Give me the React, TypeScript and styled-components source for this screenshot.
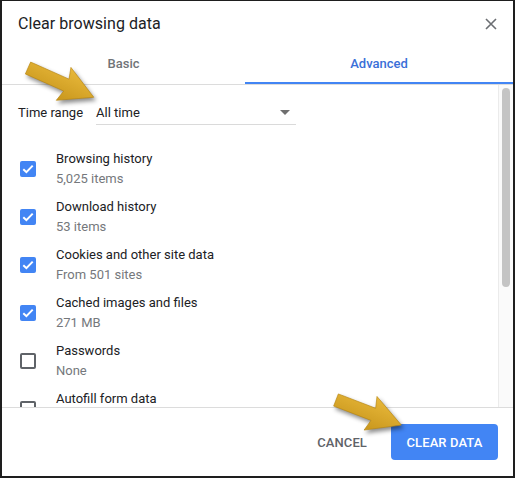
import React from "react";
import styled, { createGlobalStyle } from "styled-components";

const Global = createGlobalStyle`
  html, body { margin: 0; padding: 0; background: #ffffff; }
  body { font-family: Roboto, "Liberation Sans", Arial, sans-serif; -webkit-font-smoothing: antialiased; }
  * { box-sizing: border-box; }
`;

const Frame = styled.div`
  position: relative;
  width: 515px;
  height: 478px;
  border-style: solid;
  border-color: #1e1e1e;
  border-width: 1px 2px 2px 2px;
  background: #fff;
  display: flex;
  flex-direction: column;
  overflow: hidden;
`;

const Header = styled.div`
  height: 44px;
  display: flex;
  align-items: center;
  justify-content: space-between;
  padding: 1px 14px 0 16px;
`;

const Title = styled.div`
  font-size: 16px;
  color: #202124;
  letter-spacing: 0.05px;
`;

const CloseBtn = styled.div`
  width: 16px;
  height: 16px;
  display: flex;
  align-items: center;
  justify-content: center;
`;

const Tabs = styled.div`
  display: grid;
  grid-template-columns: 243px 1fr;
  height: 40px;
  border-bottom: 1px solid #dcdcdc;
`;

const Tab = styled.div<{ $active?: boolean }>`
  display: flex;
  align-items: center;
  justify-content: center;
  font-size: 13px;
  font-weight: 500;
  color: ${(p) => (p.$active ? "#3a6fd8" : "#717478")};
  border-bottom: 2px solid ${(p) => (p.$active ? "#4285f4" : "transparent")};
  padding-bottom: 1px;
`;

const Body = styled.div`
  flex: 1;
  display: flex;
  min-height: 0;
  border-bottom: 1px solid #dcdcdc;
`;

const Content = styled.div`
  flex: 1;
  overflow: hidden;
  padding: 0 16px;
`;

const TimeRow = styled.div`
  height: 55px;
  display: flex;
  align-items: center;
  gap: 13px;
  font-size: 13px;
  color: #202124;
`;

const Select = styled.div`
  width: 200px;
  height: 24px;
  display: flex;
  align-items: center;
  justify-content: space-between;
  border-bottom: 1px solid #dadada;
  padding-right: 6px;
  margin-top: 1px;
  font-size: 13px;
  color: #202124;
`;

const Caret = styled.div`
  width: 0;
  height: 0;
  border-left: 5px solid transparent;
  border-right: 5px solid transparent;
  border-top: 5px solid #6f6f6f;
`;

const List = styled.div`
  display: flex;
  flex-direction: column;
  gap: 8px;
  margin-top: 9px;
`;

const Item = styled.div`
  height: 40px;
  display: flex;
  align-items: flex-start;
  gap: 20px;
  padding-left: 2px;
`;

const Box = styled.div<{ $checked?: boolean }>`
  width: 16px;
  height: 16px;
  flex: none;
  margin-top: 12px;
  border-radius: 2px;
  background: ${(p) => (p.$checked ? "#4285f4" : "transparent")};
  border: ${(p) => (p.$checked ? "none" : "2px solid #5f6368")};
  display: flex;
  align-items: center;
  justify-content: center;
`;

const Texts = styled.div`
  display: flex;
  flex-direction: column;
`;

const Label = styled.div`
  font-size: 13px;
  line-height: 20px;
  color: #202124;
`;

const Sub = styled.div`
  font-size: 13px;
  line-height: 20px;
  color: #75787c;
`;

const Track = styled.div`
  width: 15px;
  flex: none;
  background: #fafafa;
  border-left: 1px solid #ebebeb;
  padding: 3px 2px 0 3px;
`;

const Thumb = styled.div`
  height: 199px;
  width: 8px;
  border-radius: 4px;
  background: #c4c4c4;
`;

const Footer = styled.div`
  height: 68px;
  display: flex;
  align-items: center;
  justify-content: flex-end;
  gap: 8px;
  padding: 0 15px 0 0;
`;

const Button = styled.div<{ $primary?: boolean }>`
  height: 36px;
  padding: ${(p) => (p.$primary ? "0" : "0 16px")};
  display: flex;
  align-items: center;
  justify-content: center;
  white-space: nowrap;
  border-radius: 4px;
  font-size: 13px;
  font-weight: 500;
  letter-spacing: 0.1px;
  color: ${(p) => (p.$primary ? "#ffffff" : "#5f6368")};
  background: ${(p) => (p.$primary ? "#4285f4" : "transparent")};
  width: ${(p) => (p.$primary ? "107px" : "auto")};
`;

const ArrowSvg = styled.svg<{ $x: number; $y: number }>`
  position: absolute;
  left: ${(p) => p.$x}px;
  top: ${(p) => p.$y}px;
  overflow: visible;
  pointer-events: none;
  filter: drop-shadow(2px 3px 2px rgba(0, 0, 0, 0.45));
`;

const Check = () => (
  <svg width="12" height="10" viewBox="0 0 12 10">
    <path d="M1.3 5.2 L4.4 8.2 L10.7 1.6" fill="none" stroke="#fff" strokeWidth="2" />
  </svg>
);

const Arrow = ({ x, y, tx, ty, angle, len }: { x: number; y: number; tx: number; ty: number; angle: number; len: number }) => {
  const head = len - 30;
  return (
    <ArrowSvg $x={x} $y={y} width={90} height={60} viewBox="0 0 90 60">
      <defs>
        <linearGradient id={`g${x}`} x1="0" y1="0" x2="0" y2="1">
          <stop offset="0" stopColor="#e8b83a" />
          <stop offset="1" stopColor="#c8961c" />
        </linearGradient>
      </defs>
      <g transform={`translate(${tx},${ty}) rotate(${angle})`}>
        <polygon
          points={`0,-6.5 ${head},-6.5 ${head - 3},-18 ${len},0 ${head - 3},18 ${head},6.5 0,6.5`}
          fill={`url(#g${x})`}
          stroke="#b8860f"
          strokeWidth="0.6"
        />
      </g>
    </ArrowSvg>
  );
};

const items = [
  { label: "Browsing history", sub: "5,025 items", checked: true },
  { label: "Download history", sub: "53 items", checked: true },
  { label: "Cookies and other site data", sub: "From 501 sites", checked: true },
  { label: "Cached images and files", sub: "271 MB", checked: true },
  { label: "Passwords", sub: "None", checked: false },
  { label: "Autofill form data", sub: "", checked: false },
];

export default function App() {
  return (
    <>
      <Global />
      <Frame>
        <Header>
          <Title>Clear browsing data</Title>
          <CloseBtn>
            <svg width="12" height="12" viewBox="0 0 12 12">
              <path d="M1 1 L11 11 M11 1 L1 11" stroke="#6b6e72" strokeWidth="1.6" />
            </svg>
          </CloseBtn>
        </Header>
        <Tabs>
          <Tab>Basic</Tab>
          <Tab $active>Advanced</Tab>
        </Tabs>
        <Body>
          <Content>
            <TimeRow>
              <span>Time range</span>
              <Select>
                <span>All time</span>
                <Caret />
              </Select>
            </TimeRow>
            <List>
              {items.map((it) => (
                <Item key={it.label}>
                  <Box $checked={it.checked}>{it.checked && <Check />}</Box>
                  <Texts>
                    <Label>{it.label}</Label>
                    {it.sub && <Sub>{it.sub}</Sub>}
                  </Texts>
                </Item>
              ))}
            </List>
          </Content>
          <Track>
            <Thumb />
          </Track>
        </Body>
        <Footer>
          <Button>CANCEL</Button>
          <Button $primary>CLEAR DATA</Button>
        </Footer>
        <Arrow x={18} y={50} tx={8} ty={17} angle={24} len={72} />
        <Arrow x={324} y={382} tx={10} ty={17} angle={21} len={70} />
      </Frame>
    </>
  );
}
